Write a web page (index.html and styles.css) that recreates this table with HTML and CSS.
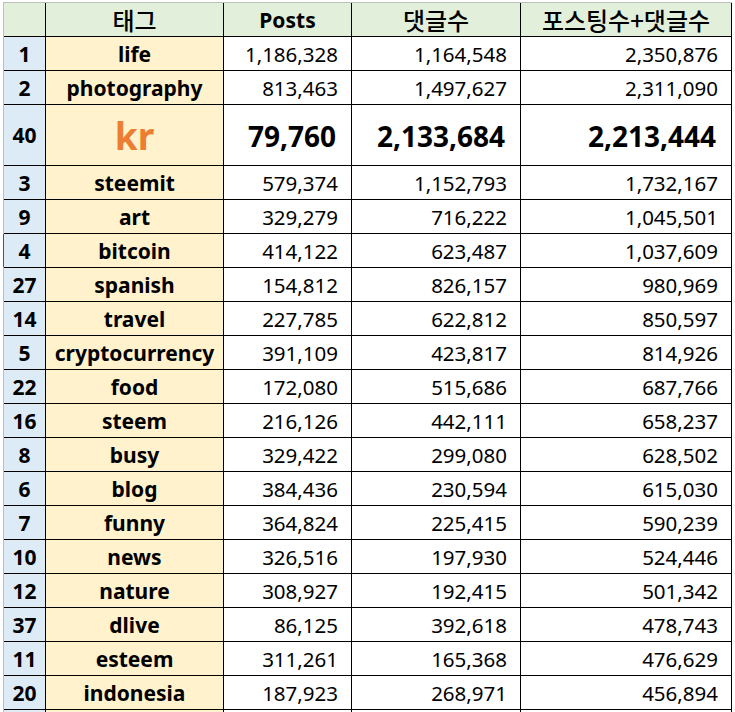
FILE: index.html
```html
<!DOCTYPE html>
<html lang="ko">
<head>
<meta charset="utf-8">
<title>태그 통계</title>
<link rel="stylesheet" href="styles.css">
</head>
<body>
<div class="sheet">
  <div class="grid">
    <div class="hd rh"></div>
    <div class="hd ko">태그</div>
    <div class="hd">Posts</div>
    <div class="hd ko">댓글수</div>
    <div class="hd ko">포스팅수+댓글수</div>

    <div class="rh">1</div><div class="tag">life</div><div class="num">1,186,328</div><div class="num">1,164,548</div><div class="num">2,350,876</div>
    <div class="rh">2</div><div class="tag">photography</div><div class="num">813,463</div><div class="num">1,497,627</div><div class="num">2,311,090</div>
    <div class="rh big-row">40</div><div class="tag kr">kr</div><div class="num big">79,760</div><div class="num big">2,133,684</div><div class="num big">2,213,444</div>
    <div class="rh">3</div><div class="tag">steemit</div><div class="num">579,374</div><div class="num">1,152,793</div><div class="num">1,732,167</div>
    <div class="rh">9</div><div class="tag">art</div><div class="num">329,279</div><div class="num">716,222</div><div class="num">1,045,501</div>
    <div class="rh sel">4</div><div class="tag">bitcoin</div><div class="num">414,122</div><div class="num">623,487</div><div class="num">1,037,609</div>
    <div class="rh">27</div><div class="tag">spanish</div><div class="num">154,812</div><div class="num">826,157</div><div class="num">980,969</div>
    <div class="rh">14</div><div class="tag">travel</div><div class="num">227,785</div><div class="num">622,812</div><div class="num">850,597</div>
    <div class="rh">5</div><div class="tag">cryptocurrency</div><div class="num">391,109</div><div class="num">423,817</div><div class="num">814,926</div>
    <div class="rh thick">22</div><div class="tag thick">food</div><div class="num thick">172,080</div><div class="num thick">515,686</div><div class="num thick">687,766</div>
    <div class="rh">16</div><div class="tag">steem</div><div class="num">216,126</div><div class="num">442,111</div><div class="num">658,237</div>
    <div class="rh">8</div><div class="tag">busy</div><div class="num">329,422</div><div class="num">299,080</div><div class="num">628,502</div>
    <div class="rh">6</div><div class="tag">blog</div><div class="num">384,436</div><div class="num">230,594</div><div class="num">615,030</div>
    <div class="rh">7</div><div class="tag">funny</div><div class="num">364,824</div><div class="num">225,415</div><div class="num">590,239</div>
    <div class="rh">10</div><div class="tag">news</div><div class="num">326,516</div><div class="num">197,930</div><div class="num">524,446</div>
    <div class="rh">12</div><div class="tag">nature</div><div class="num">308,927</div><div class="num">192,415</div><div class="num">501,342</div>
    <div class="rh">37</div><div class="tag">dlive</div><div class="num">86,125</div><div class="num">392,618</div><div class="num">478,743</div>
    <div class="rh">11</div><div class="tag">esteem</div><div class="num">311,261</div><div class="num">165,368</div><div class="num">476,629</div>
    <div class="rh">20</div><div class="tag">indonesia</div><div class="num">187,923</div><div class="num">268,971</div><div class="num">456,894</div>
    <div class="rh"></div><div class="tag"></div><div class="num"></div><div class="num"></div><div class="num"></div>
  </div>
</div>
</body>
</html>
```

FILE: styles.css
```css
html, body {
  margin: 0;
  padding: 0;
  background: #ffffff;
  overflow: hidden;
}

.sheet {
  padding-top: 2px;
  padding-left: 3px;
  font-family: "Noto Sans", "Noto Sans CJK KR", sans-serif;
  color: #000;
}

.grid {
  display: grid;
  grid-template-columns: 41px 177px 127px 168px 210px;
  grid-auto-rows: 33px;
  grid-template-rows: 33px 33px 33px 60px;
  gap: 1px;
  background: #000;
  border-top: 1px solid #bfbfbf;
  border-left: 1px solid #bfbfbf;
  padding-right: 1px;
  width: max-content;
}

.grid > div {
  display: flex;
  align-items: center;
  background: #fff;
  white-space: nowrap;
  font-size: 20.5px;
  line-height: 1;
  padding-top: 1px;
}

.hd {
  background: #e2efda !important;
  justify-content: center;
  font-weight: 700;
  font-size: 21px !important;
}

.hd.ko {
  font-family: "Noto Sans CJK KR", sans-serif;
  font-size: 24px !important;
  font-weight: 500;
}

.rh {
  background: #ddebf7 !important;
  justify-content: center;
  font-weight: 700;
  font-size: 21px !important;
}

.hd.rh {
  background: #e2efda !important;
}

.sel {
  box-shadow: -1px 0 0 #217346;
}

.tag {
  background: #fff2cc !important;
  justify-content: center;
  font-weight: 700;
  font-size: 21px !important;
}

.num {
  justify-content: flex-end;
  padding-right: 13px;
}

.kr {
  color: #ed7d31;
  font-size: 37px !important;
}

.big {
  font-weight: 700;
  font-size: 28px !important;
  padding-right: 15px;
}

.thick {
  box-shadow: 0 1px 0 #000;
}
```
